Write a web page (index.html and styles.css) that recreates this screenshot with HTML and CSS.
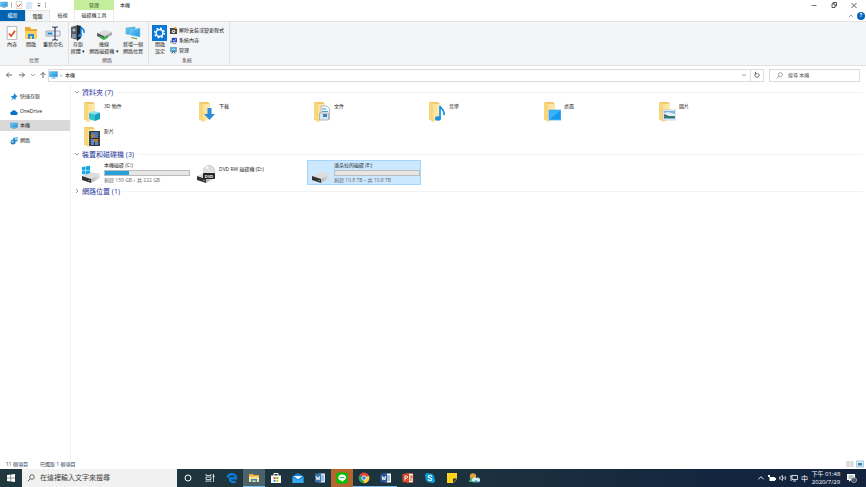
FILE: index.html
```html
<!DOCTYPE html>
<html lang="zh-Hant">
<head>
<meta charset="utf-8">
<title>本機</title>
<link rel="stylesheet" href="styles.css">
</head>
<body>
<svg class="defs" aria-hidden="true">
  <defs>
    <linearGradient id="g-folder" x1="0" x2="1"><stop offset="0" stop-color="#fbdc86"/><stop offset="1" stop-color="#fdeab0"/></linearGradient>
    <linearGradient id="g-screen" x1="0" y1="0" x2="1" y2="1"><stop offset="0" stop-color="#6fcdf8"/><stop offset="1" stop-color="#1c93e0"/></linearGradient>
    <linearGradient id="g-drive" x1="0" x2="1"><stop offset="0" stop-color="#b5b5b5"/><stop offset="1" stop-color="#e6e6e6"/></linearGradient>
    <symbol id="pc" viewBox="0 0 16 14"><path fill="url(#g-screen)" stroke="#3d93c8" stroke-width=".8" d="M1 1h14v9H1z"/><path fill="#6aa5c9" d="M7 10h2v2h3v1H4v-1h3z"/></symbol>
    <symbol id="check" viewBox="0 0 12 16"><path fill="#fff" stroke="#9a9a9a" stroke-width=".8" d="M.5.5h11v15H.5z"/><path fill="none" stroke="#e5501f" stroke-width="2" d="M2.500 8.500l2.500 3 4.500-6"/></symbol>
    <symbol id="folder" viewBox="0 0 18 21"><path fill="#f1c968" d="M1 1h9l1.500 1.500V18L1 19z"/><path fill="url(#g-folder)" d="M4 3h7.500v14L6 21 1 18V1z"/><path fill="#f8d67c" d="M1 1l4 3v17l-4-3z"/></symbol>
    <symbol id="drive" viewBox="0 0 20 18"><path fill="#ddd" d="M1 11l9-4 9 2-9 5z"/><path fill="#333" d="M1 11l9 3v4l-9-3z"/><path fill="url(#g-drive)" d="M10 14l9-5v4l-9 5z"/><path fill="#6b8f68" d="M7 15h2v1H7z"/></symbol>
    <symbol id="chev" viewBox="0 0 6 6"><path fill="none" stroke="currentColor" stroke-width=".7" d="M1 2l2 2 2-2"/></symbol>
    <symbol id="glass" viewBox="0 0 8 8"><circle cx="5" cy="3" r="2.300" fill="none" stroke="currentColor" stroke-width=".7"/><path stroke="currentColor" stroke-width=".8" d="M3.300 4.700L.8 7.300"/></symbol>
  </defs>
</svg>

<div class="window">
  <header class="titlebar">
    <div class="quick">
      <svg class="i8"><use href="#pc"/></svg><span class="bar"></span>
      <button aria-label="內容"><svg class="i8"><use href="#check"/></svg></button>
      <button aria-label="新增資料夾"><svg class="i7" viewBox="0 0 7 7"><path fill="#dce7f6" d="M0 0h6v7H0z"/></svg></button>
      <button aria-label="自訂"><svg class="i6" viewBox="0 0 6 6"><path fill="#444" d="M1.500 1h3v.6h-3zM1.500 3h3L3 5z"/></svg></button><span class="bar"></span>
    </div>
    <div class="context">管理</div>
    <h1>本機</h1>
    <div class="controls">
      <button aria-label="最小化"><svg viewBox="0 0 8 8"><path stroke="#555" stroke-width=".8" d="M1.500 4.500h5"/></svg></button>
      <button aria-label="還原"><svg viewBox="0 0 8 8"><path fill="none" stroke="#333" stroke-width=".8" d="M2 3h3v3.500H2zM3 3V1.500h3.500V5H5"/></svg></button>
      <button aria-label="關閉"><svg viewBox="0 0 8 8"><path stroke="#333" stroke-width=".8" d="M1.500 2l5 5m0-5l-5 5"/></svg></button>
    </div>
  </header>

  <nav class="tabs">
    <button class="tab file">檔案</button>
    <button class="tab active">電腦</button>
    <button class="tab">檢視</button>
    <button class="tab tools">磁碟機工具</button>
    <div class="help">
      <button aria-label="摺疊功能區"><svg class="i6 up"><use href="#chev"/></svg></button>
      <button class="question" aria-label="說明">?</button>
    </div>
  </nav>

  <section class="ribbon">
    <div class="group">
      <div class="tools-row">
        <button class="big w18"><svg viewBox="0 0 18 16"><use href="#check" x="3" y="1" width="12" height="14"/></svg>內容</button>
        <button class="big w20"><svg viewBox="0 0 18 16"><path fill="#eaa92e" d="M3 2h5l1 2h6v10H3z"/><path fill="#fcd063" d="M3 6h12v8H3z"/><path fill="#2e8fd8" d="M6 14V9h6v5h-2v-3H8v3z"/></svg>開啟</button>
        <button class="big w24"><svg viewBox="0 0 18 16"><path fill="#e8eef5" stroke="#8b98a5" stroke-width=".8" d="M2 6h14v5H2z"/><path fill="#2584cf" d="M3.500 7.500h5v2h-5z"/><path fill="none" stroke="#345" stroke-width="1.200" d="M8 2h2l1 1 1-1h2M11 3v11M8 15h2l1-1 1 1h2"/></svg>重新命名</button>
      </div>
      <div class="caption">位置</div>
    </div>
    <div class="group second">
      <div class="tools-row">
        <button class="big w18"><svg viewBox="0 0 18 16"><path fill="#555e68" d="M2 2l7-2v15l-7-2z"/><path fill="#20262d" d="M8 0l4 1v12l-4 3z"/><circle cx="5" cy="5" r="1.500" fill="#a8bfd0"/><path fill="#84939f" d="M3 9h4v4H3z"/><path fill="none" stroke="#1686df" stroke-width="1.500" d="M12 10V2c1 2 4 2 3 6"/><ellipse cx="11" cy="10.500" rx="2" ry="1.500" fill="#1686df"/></svg>存取<br>媒體 ▾</button>
        <button class="big w34"><svg viewBox="0 0 18 16"><path fill="#ddd" d="M2 8l8-3 7 2-8 4z"/><path fill="#555" d="M2 8l7 3v3l-7-3z"/><path fill="#aaa" d="M9 11l8-4v3l-8 4z"/><path fill="#35ab45" d="M5 11l4 1.500 4-2v2l-4 2.500-4-2z"/></svg>連線<br>網路磁碟機 ▾</button>
        <button class="big w22"><svg viewBox="0 0 18 16"><path fill="url(#g-screen)" stroke="#60adcf" stroke-width=".6" d="M2 3l9-1v8l-9-1z"/><path fill="url(#g-screen)" stroke="#8fd2ef" stroke-width=".6" d="M6 5l10-2v9L6 10z"/><path fill="#73ac55" d="M7 12l6 1v1.500L7 13z"/></svg>新增一個<br>網路位置</button>
      </div>
      <div class="caption">網路</div>
    </div>
    <div class="group third">
      <div class="tools-row">
        <button class="big w20"><svg viewBox="0 0 18 16"><path fill="#0878d7" d="M1 0h15v16H1z"/><circle cx="8.500" cy="8" r="3.400" fill="none" stroke="#fff" stroke-width="1.500"/><circle cx="8.500" cy="8" r="4.800" fill="none" stroke="#fff" stroke-width="1.500" stroke-dasharray="1.800 1.970"/></svg>開啟<br>設定</button>
        <div class="small-list">
          <button><svg class="i7" viewBox="0 0 8 8"><path fill="#4b4540" d="M0 1h5l3 1v6H0z"/><circle cx="4" cy="5" r="2" fill="#ddd"/><circle cx="4" cy="5" r=".8" fill="#555"/><path fill="#e6953a" d="M5 0h2v2H5z"/></svg>解除安裝或變更程式</button>
          <button><svg class="i7" viewBox="0 0 8 8"><path fill="#9db2c7" d="M0 4h3v3H0z"/><path fill="#2745b8" d="M2 1h6v5H2z"/><path fill="none" stroke="#fff" stroke-width=".8" d="M3.500 3.500L5 5l2-3"/><path fill="#889" d="M3 7h4v1H3z"/></svg>系統內容</button>
          <button><svg class="i7" viewBox="0 0 8 8"><path fill="#48a9e2" stroke="#627c90" stroke-width=".6" d="M.5.5h7v5h-7z"/><path fill="#e3f1fb" d="M2 2h4v1H2z"/><path fill="none" stroke="#456" stroke-width="1" d="M2 7.500l2-3 2 3"/></svg>管理</button>
        </div>
      </div>
      <div class="caption">系統</div>
    </div>
  </section>

  <div class="address-row">
    <button aria-label="上一頁"><svg viewBox="0 0 8 8"><path fill="none" stroke="#555" stroke-width=".9" d="M7 4H1.500M4 1.500L1.500 4 4 6.500"/></svg></button>
    <button aria-label="下一頁"><svg viewBox="0 0 8 8"><path fill="none" stroke="#555" stroke-width=".9" d="M1 4h5.500M4 1.500L6.500 4 4 6.500"/></svg></button>
    <button class="recent" aria-label="最近的位置"><svg class="i6"><use href="#chev"/></svg></button>
    <button class="upward" aria-label="上一層"><svg viewBox="0 0 8 8"><path fill="none" stroke="#555" stroke-width=".9" d="M4 7V1.500M1.500 4L4 1.500 6.500 4"/></svg></button>
    <div class="address">
      <svg class="i9"><use href="#pc"/></svg><span class="crumb">›</span><span class="place">本機</span>
      <button aria-label="先前的位置"><svg class="i6"><use href="#chev"/></svg></button>
      <button class="refresh" aria-label="重新整理"><svg viewBox="0 0 8 8"><path fill="none" stroke="#444" stroke-width=".8" d="M5.500 2.500A2.200 2.200 0 1 1 2.500 2.500M2.500.8v2h2"/></svg></button>
    </div>
    <label class="find"><svg class="i7"><use href="#glass"/></svg><input type="search" placeholder="搜尋 本機" aria-label="搜尋 本機"></label>
  </div>

  <div class="body">
    <nav class="side">
      <a href="#"><svg class="i8" viewBox="0 0 8 8"><path fill="#2088d2" d="M4 0l3.500 3.500-1 .5-1 1v2L3.500 5.500 1 8l1.500-3L.8 3h2l1.200-1z"/></svg>快速存取</a>
      <a href="#"><svg class="i8" viewBox="0 0 8 8"><path fill="#0872c8" d="M1.500 7a1.700 1.700 0 0 1 0-3.300A2.500 2.500 0 0 1 6 3.500 1.800 1.800 0 0 1 6.500 7z"/></svg>OneDrive</a>
      <a href="#" class="current"><svg class="i8"><use href="#pc"/></svg>本機</a>
      <a href="#"><svg class="i8" viewBox="0 0 8 8"><path fill="#3c9ad8" d="M3 1l4.500-1v4.500L3 5z"/><circle cx="3" cy="5" r="2.500" fill="#2b7fbd"/><path fill="#8fd0f4" d="M2 3.500l2 .5-1 2-2-1zM5 1l2-.3v2L5 3z"/></svg>網路</a>
    </nav>

    <main class="content">
      <section>
        <h2><button><svg class="i6"><use href="#chev"/></svg>資料夾 (7)</button></h2>
        <div class="grid">
          <a href="#" class="tile"><svg viewBox="0 0 18 21"><use href="#folder"/><path fill="#8be3ed" d="M6 12l5-2 6 1.500-5 2z"/><path fill="#35bfd3" d="M6 12l6 1.500V20l-6-2z"/><path fill="#159fb9" d="M12 13.500l5-2V18l-5 2z"/></svg>3D 物件</a>
          <a href="#" class="tile"><svg viewBox="0 0 18 21"><use href="#folder"/><path fill="#2b8ddb" d="M9.500 7h4v6H17l-5.500 6L6 13h3.500z"/></svg>下載</a>
          <a href="#" class="tile"><svg viewBox="0 0 18 21"><use href="#folder"/><path fill="#f4f7f9" stroke="#9aa4ad" stroke-width=".7" d="M8 5h6l2.500 2.500V18H8z"/><path stroke="#4b9fd5" stroke-width="1.200" d="M9 8h4M9 10.500h6"/><path fill="#dce6ed" stroke="#8695a0" stroke-width=".6" d="M6.500 12h9v7h-9z"/><path fill="#3c83ba" d="M10 13h4v3h-4z"/></svg>文件</a>
          <a href="#" class="tile"><svg viewBox="0 0 18 21"><use href="#folder"/><path fill="none" stroke="#1591e4" stroke-width="1.700" d="M12 17V5c1 3 5 4 4 9"/><ellipse cx="10" cy="17.500" rx="3" ry="2.200" fill="#1591e4"/></svg>音樂</a>
          <a href="#" class="tile"><svg viewBox="0 0 18 21"><use href="#folder"/><path fill="#119bf0" stroke="#58bafa" stroke-width=".8" d="M6 9h12v10H6z"/><path fill="#3bb1fa" d="M7 18l10-8v-.5H7z"/></svg>桌面</a>
          <a href="#" class="tile"><svg viewBox="0 0 18 21"><use href="#folder"/><path fill="#f5f7f9" stroke="#b1bbc2" stroke-width=".6" d="M5 9h13v10H5z"/><path fill="#77b7e4" d="M6 10h11v8H6z"/><path fill="#e2f0f6" d="M6 12l4-1 7 2v2H6z"/><path fill="#407865" d="M6 13l5 2h6v2H6z"/></svg>圖片</a>
          <a href="#" class="tile"><svg viewBox="0 0 18 21"><use href="#folder"/><path fill="#333" d="M6 5h11v15H6z"/><path fill="#4279bb" d="M8 6h7v6H8z"/><path fill="#b67a3e" d="M8 9l3-2 1 4-4 1zM11 13h4v3h-4z"/><path fill="#5889c2" d="M8 13h3v6H8zM12 16h3v3h-3z"/><path stroke="#999" stroke-width=".6" stroke-dasharray="1 1" d="M7 5v15M16 5v15"/></svg>影片</a>
        </div>
      </section>
      <section>
        <h2><button><svg class="i6"><use href="#chev"/></svg>裝置和磁碟機 (3)</button></h2>
        <div class="grid">
          <a href="#" class="tile drive"><svg viewBox="0 0 20 18"><use href="#drive"/><path fill="#15a9e8" d="M1 2l3.500-.6v3.800H1zM5 1.300L9 .7v4.500H5zM1 5.700h3.500v3.700L1 9zM5 5.700h4V8l-4 1.500z"/></svg>
            <span class="info"><span>本機磁碟 (C:)</span><span class="meter"><span class="used" style="width:28%"></span></span><span class="free">剩餘 159 GB，共 222 GB</span></span></a>
          <a href="#" class="tile drive disc"><svg viewBox="0 0 20 18"><use href="#drive"/><circle cx="13" cy="6" r="5.700" fill="#dce0e1" stroke="#aab0b2" stroke-width=".5"/><path fill="#f8fafa" d="M13 6l-4-4 3-1.500zM13 6l5 2-1 2z"/><circle cx="13" cy="5" r="1.300" fill="#fff" stroke="#aaa" stroke-width=".4"/><rect x="7" y="8" width="12" height="6" rx="1" fill="#252525"/><text class="dvd" x="13" y="12.800">DVD</text></svg>DVD RW 磁碟機 (D:)</a>
          <a href="#" class="tile drive selected"><svg viewBox="0 0 20 18"><use href="#drive"/></svg>
            <span class="info"><span>潘朵拉的磁碟 (E:)</span><span class="meter"></span><span class="free">剩餘 10.8 TB，共 10.8 TB</span></span></a>
        </div>
      </section>
      <section>
        <h2><button><svg class="i6 right"><use href="#chev"/></svg>網路位置 (1)</button></h2>
      </section>
    </main>
  </div>

  <footer class="status">
    <span>11 個項目</span><span>已選取 1 個項目</span>
    <div class="views">
      <button aria-label="詳細資料"><svg class="i8" viewBox="0 0 8 8"><path stroke="#777" stroke-width=".6" stroke-dasharray="3 1 3" d="M.5 2h7M.5 4h7M.5 6h7"/></svg></button>
      <button aria-label="大圖示"><svg class="i8" viewBox="0 0 8 8"><path fill="#d8effc" stroke="#8fc3e2" stroke-width=".8" d="M.5 1h7v6h-7z"/><path fill="#3d7da7" d="M2 3h4v2.500H2z"/></svg></button>
    </div>
  </footer>
</div>

<div class="taskbar">
  <button class="start" aria-label="開始"><svg class="i8" viewBox="0 0 8 8"><path fill="#fff" d="M0 1l3.600-.5v3.200H0zM4.100.5L8 0v3.700H4.100zM0 4.200h3.600v3.300L0 7zM4.100 4.200H8V8l-3.900-.5z"/></svg></button>
  <label class="task-search"><svg class="i8"><use href="#glass"/></svg><input type="search" placeholder="在這裡輸入文字來搜尋" aria-label="在這裡輸入文字來搜尋"></label>
  <div class="apps">
    <button aria-label="Cortana"><svg viewBox="0 0 12 12"><circle cx="6" cy="6" r="3" fill="none" stroke="#fff"/></svg></button>
    <button aria-label="工作檢視"><svg viewBox="0 0 12 12"><path fill="none" stroke="#e8edef" stroke-width=".8" d="M2 2v1.500h5V2M2 5h5v2.500H2zM2 10V9h5v1M9.500 2v8"/><path fill="#fff" d="M8.700 3.500h1.700v1.700H8.700z"/></svg></button>
    <button aria-label="Edge"><svg viewBox="0 0 12 12"><path fill="none" stroke="#0b7ddc" stroke-width="2.200" d="M1.500 5.500C3 1 10 .8 10 6.300H4.300M4 5.500c-1 5 3.500 5.300 5.700 3.800"/></svg></button>
    <button class="lit run" aria-label="檔案總管"><svg viewBox="0 0 12 12"><path fill="#e7ae3d" d="M1 2h4l1 1h5v7H1z"/><path fill="#ffe18b" d="M1 4.500h10V10H1z"/><path fill="#3487c6" d="M3 10V7h6v3H7.500V8.500h-3V10z"/></svg></button>
    <button aria-label="Microsoft Store"><svg viewBox="0 0 12 12"><path fill="#fff" d="M1 3.500h10V11H1z"/><path fill="none" stroke="#fff" d="M4 4V1.500h4V4"/><path fill="#e44b22" d="M3.500 5h2v2h-2z"/><path fill="#7ab800" d="M6.300 5h2v2h-2z"/><path fill="#0c9de1" d="M3.500 7.800h2v2h-2z"/><path fill="#fbb900" d="M6.300 7.800h2v2h-2z"/></svg></button>
    <button aria-label="郵件"><svg viewBox="0 0 12 12"><path fill="#147fd4" d="M.5 4L6 1l5.500 3v7H.5z"/><path fill="#e9f6ff" d="M1.500 4h9L6 7.500z"/><path fill="#35a9ef" d="M.5 5L6 8.500 11.500 5v6H.5z"/></svg></button>
    <button aria-label="WordPad"><svg viewBox="0 0 12 12"><path fill="#dce9f4" d="M5 1.500h6v9H5z"/><path stroke="#4886b8" stroke-width=".8" d="M7 4h3M7 6h3M7 8h3"/><path fill="#3974ae" d="M1 2l6-1v10l-6-1z"/><path fill="none" stroke="#fff" stroke-width=".8" d="M2.200 4l.8 4 1-3 1 3 .8-4"/></svg></button>
    <button class="line" aria-label="LINE"><svg viewBox="0 0 12 12"><rect x=".5" y=".5" width="11" height="11" rx="2" fill="#00c300"/><path fill="#fff" d="M6 2.500c5 0 5 4.500 2 5.800L6 10V8.700C1 8.500 1 2.500 6 2.500z"/><path stroke="#00a700" stroke-width=".8" d="M3.700 5.600h4.600"/></svg></button>
    <button class="run" aria-label="Chrome"><svg viewBox="0 0 12 12"><path fill="#df4536" d="M6 6L1.300 3.500a5.200 5.200 0 0 1 9.400 0z"/><path fill="#2ea453" d="M6 6L5.500 11.200A5.200 5.200 0 0 1 1.300 3.500z"/><path fill="#fbce35" d="M6 6l4.700-2.500a5.200 5.200 0 0 1-5.200 7.700z"/><circle cx="6" cy="6" r="2.200" fill="#3f7fe8" stroke="#fff" stroke-width=".8"/></svg></button>
    <button class="run" aria-label="Word"><svg viewBox="0 0 12 12"><path fill="#fff" d="M5 1.500h6v9H5z"/><path stroke="#2b579a" stroke-width=".8" d="M7 4h3M7 6h3M7 8h3"/><path fill="#2b579a" d="M.5 2L7 1v10l-6.500-1z"/><path fill="none" stroke="#fff" stroke-width=".9" d="M2 4l.8 4 1-3 1 3 .8-4"/></svg></button>
    <button aria-label="PowerPoint"><svg viewBox="0 0 12 12"><path fill="#fff" stroke="#d24726" stroke-width=".6" d="M5 1.500h6v9H5z"/><path fill="none" stroke="#d24726" d="M7.500 4H10v2H7.500M7.500 8H10"/><path fill="#d24726" d="M.5 2L7 1v10l-6.500-1z"/><path fill="none" stroke="#fff" stroke-width=".9" d="M3 8.500V4h1.500c1.500 0 1.500 2.300 0 2.300H3"/></svg></button>
    <button aria-label="Skype"><svg viewBox="0 0 12 12"><circle cx="6" cy="6" r="4.500" fill="#0b9cdf"/><circle cx="3.500" cy="3.500" r="2.500" fill="#0b9cdf"/><circle cx="8.500" cy="8.500" r="2.500" fill="#0b9cdf"/><path fill="none" stroke="#fff" stroke-width="1.100" d="M8 4.500C7 3 4 3.300 4.300 4.800 4.600 6.200 8 5.700 7.800 7.400 7.500 9 4.500 8.700 4 7.400"/></svg></button>
    <button aria-label="自黏便箋"><svg viewBox="0 0 12 12"><path fill="#ffd21f" d="M1 1h10v6L7.500 11H1z"/><path fill="#2c3232" d="M7 6.500h4L7 11z"/></svg></button>
    <button aria-label="雲端相簿"><svg viewBox="0 0 12 12"><circle cx="5" cy="4.500" r="3.200" fill="#dfa43b"/><path fill="#3fb07b" d="M1 9l3-4 5 5H1z"/><path fill="#d6eee8" d="M4.500 9.500a2 2 0 0 1 0-3 2.500 2.500 0 0 1 4-.5 2.200 2.200 0 0 1 2.500 4z"/><path fill="#4a99d1" d="M5 10.500L8 8l3.500 2.500z"/></svg></button>
  </div>
  <div class="tray">
    <button aria-label="顯示隱藏的圖示"><svg class="i8 up"><use href="#chev"/></svg></button>
    <button aria-label="電池"><svg class="i8" viewBox="0 0 8 8"><path fill="#fff" d="M1.500 3H7v1h1v2H7v1H1.500zM0 1h2v2H0z"/></svg></button>
    <button aria-label="音量"><svg class="i8" viewBox="0 0 8 8"><path fill="none" stroke="#fff" stroke-width=".7" d="M.5 3h1.300L3.500 1.500v5L1.800 5H.5zM4.700 3q.8 1 0 2M6 2q1.500 2 0 4"/></svg></button>
    <button aria-label="網路"><svg class="i8" viewBox="0 0 8 8"><path fill="none" stroke="#fff" stroke-width=".8" d="M2 1.500h5.500v4H2zM3 7h3M1 2v5M0 2h2"/></svg></button>
    <button class="ime">中</button>
    <time class="clock"><span>下午 01:48</span><span>2020/7/29</span></time>
    <button class="notify" aria-label="通知"><svg class="i8" viewBox="0 0 8 8"><path fill="#fff" d="M0 0h8v6H4L2 8V6H0z"/><path stroke="#234" stroke-width=".6" d="M1.500 2h5M1.500 4h4"/></svg><span class="badge">1</span></button>
  </div>
</div>
</body>
</html>
```
FILE: styles.css
```css
* { box-sizing: border-box; }
body {
  margin: 0;
  min-height: 100vh;
  display: flex;
  flex-direction: column;
  background: #fff;
  color: #222;
  font-family: "Open Sans", "Noto Sans CJK TC", sans-serif;
  font-size: 5px;
  line-height: 7px;
}
button, input { font: inherit; color: inherit; border: 0; padding: 0; margin: 0; background: none; }
button { display: flex; align-items: center; justify-content: center; white-space: nowrap; }
input { outline: 0; min-width: 0; flex: 1; }
input::placeholder { color: #555; opacity: 1; }
a { color: inherit; text-decoration: none; }
svg { display: block; flex: none; width: 8px; height: 8px; }
h1, h2 { margin: 0; font: inherit; }
.defs { position: absolute; width: 0; height: 0; }
.i6 { width: 6px; height: 6px; color: #777; }
.i7 { width: 7px; height: 7px; }
.i9 { width: 9px; height: 8px; }
.up { transform: rotate(180deg); }
.right { transform: rotate(-90deg); }

.window { flex: 1; display: flex; flex-direction: column; }

.titlebar { display: flex; height: 10px; align-items: center; }
.quick { width: 74px; display: flex; align-items: center; gap: 3px; }
.bar { width: 1px; height: 6px; background: #bbb; }
.context { width: 40px; height: 10px; line-height: 10px; text-align: center; background: #c4ee9b; color: #3b5426; }
h1 { padding-left: 6px; }
.controls { margin-left: auto; padding-right: 2px; display: flex; }
.controls button { width: 20px; }

.tabs { display: flex; height: 11px; }
.tab { width: 25px; }
.file { background: #0063b1; color: #fff; }
.active { background: #f4f5f7; border: solid #e4e5e7; border-width: 1px 1px 0; }
.tools { width: 40px; border: solid #e8eee2; border-width: 0 1px; margin-left: -1px; }
.help { margin-left: auto; display: flex; align-items: center; gap: 3px; padding-right: 1px; }
.question { width: 8px; height: 8px; border-radius: 50%; background: #0864b9; color: #fff; font-weight: bold; }

.ribbon { display: flex; height: 45px; background: #f4f5f7; border: solid #e1e2e4; border-width: 1px 0; }
.group { display: flex; flex-direction: column; padding: 3px 3px 1px; border-right: 1px solid #e0e2e4; }
.second { padding-left: 0; }
.third { padding-left: 1px; padding-right: 5px; }
.tools-row { display: flex; flex: 1; }
.big { flex-direction: column; justify-content: flex-start; text-align: center; }
.big svg { width: 18px; height: 16px; }
.w18 { width: 18px; }
.w20 { width: 20px; }
.w22 { width: 24px; }
.w24 { width: 24px; }
.w34 { width: 34px; }
.small-list { display: flex; flex-direction: column; }
.small-list button { height: 10px; gap: 2px; justify-content: flex-start; }
.caption { text-align: center; color: #555; }

.address-row { display: flex; align-items: center; height: 18px; padding: 0 6px 0 4px; }
.address-row > button { width: 10px; margin-right: 3px; }
.address-row > .recent { width: 6px; margin-right: 2px; }
.address-row > .upward { margin-right: 0; }
.address { flex: 1; display: flex; align-items: center; height: 13px; border: 1px solid #dcdcdc; }
.crumb { width: 6px; text-align: center; }
.place { flex: 1; padding-left: 1px; }
.address button { width: 13px; height: 11px; }
.address .refresh { border-left: 1px solid #dcdcdc; }
.find { width: 91px; height: 13px; margin-left: 5px; padding-left: 6px; display: flex; align-items: center; gap: 5px; border: 1px solid #dcdcdc; color: #777; }

.body { flex: 1; display: flex; }
.side { width: 71px; padding: 7px 0; border-right: 1px solid #f4f4f4; }
.side a { display: flex; align-items: center; gap: 2px; height: 11px; margin: 0 0 4px; padding-left: 10px; }
.side a:nth-child(2n) { margin-bottom: 3px; }
.side .current { background: #d9d9d9; }
.content { flex: 1; padding: 2px 3px 0; }
h2 { display: flex; align-items: center; gap: 4px; height: 12px; font-size: 7px; color: #27369a; }
h2::after { content: ""; flex: 1; height: 1px; background: #f2f2f2; }
h2 button { gap: 2px; }
.grid { display: grid; grid-template-columns: repeat(auto-fill, 115px); padding-left: 3px; }
.tile { display: flex; height: 25px; padding: 3px 0 0 6px; gap: 2px; line-height: 11px; }
.tile > svg { width: 18px; height: 21px; margin-right: 1px; }
.drive { margin-right: 1px; padding: 1px 1px 0 4px; }
.drive > svg { width: 20px; height: 18px; margin: 4px 1px 0 0; }
.disc { line-height: 16px; }
.selected { background: #cce8ff; outline: 1px solid #a6d5fa; outline-offset: -1px; }
.info { display: flex; flex-direction: column; flex: 1; line-height: 9px; }
.meter { width: 86px; height: 6px; border: 1px solid #bcbcbc; background: #e6e6e6; }
.used { display: block; height: 4px; background: #26a0da; }
.free { color: #6d6d6d; }
.dvd { font: bold 4px "Liberation Sans", sans-serif; fill: #fff; text-anchor: middle; }

.status { display: flex; align-items: center; height: 10px; gap: 12px; padding: 0 2px 0 6px; color: #1d3157; }
.views { margin-left: auto; display: flex; gap: 2px; }

.taskbar { display: flex; height: 18px; background: linear-gradient(90deg, #20373f, #1c333e 50%, #13253f 85%, #13233e); color: #fff; }
.start { width: 22px; }
.task-search { width: 155px; display: flex; align-items: center; gap: 5px; padding-left: 5px; background: #f1f1f1; color: #333; font-size: 7px; line-height: 10px; }
.task-search input::placeholder { color: #444; }
.apps { display: flex; }
.apps button { width: 22px; }
.apps svg { width: 12px; height: 12px; }
.apps .lit { background: #4c626a; }
.apps .line { background: #b5652e; }
.apps .run { box-shadow: inset 0 -1px #76b9ed; }
.tray { margin-left: auto; display: flex; align-items: center; gap: 3px; padding-right: 8px; }
.ime { font-size: 7px; }
.clock { display: flex; flex-direction: column; align-items: center; width: 30px; font-size: 6px; line-height: 8px; }
.notify { position: relative; width: 14px; }
.badge { position: absolute; left: 7px; top: 3px; width: 6px; height: 6px; border-radius: 50%; background: #26364d; border: 1px solid #aaa; font-size: 4px; line-height: 4px; }
```
